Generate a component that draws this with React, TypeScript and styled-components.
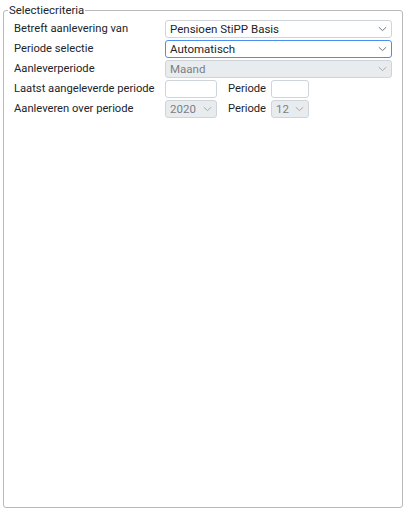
import React from "react";
import styled, { createGlobalStyle, css } from "styled-components";

const Global = createGlobalStyle`
  html, body {
    margin: 0;
    padding: 0;
    background: #ffffff;
  }
  body {
    font-family: Roboto, "Liberation Sans", Arial, sans-serif;
    font-size: 11.2px;
    color: #212529;
  }
`;

const Panel = styled.fieldset`
  box-sizing: border-box;
  margin: 3px 4px 4px 3px;
  height: 505px;
  border: 1px solid #b9b9b9;
  border-radius: 3px;
  padding: 3px 10px 0 10px;
  min-width: 0;
`;

const Legend = styled.legend`
  margin-left: -6px;
  padding: 0 1px;
  font-size: 11.4px;
  line-height: 14px;
  color: #212529;
`;

const Form = styled.div`
  display: grid;
  grid-template-columns: 151px 1fr;
  row-gap: 2px;
  align-items: center;
`;

const Label = styled.label`
  font-size: 11.2px;
  line-height: 18px;
  white-space: nowrap;
`;

const Inline = styled.div`
  display: flex;
  align-items: center;
`;

const InlineLabel = styled.span`
  width: 54px;
  padding-left: 11px;
  box-sizing: border-box;
  font-size: 11.2px;
  line-height: 18px;
`;

const fieldBase = css`
  box-sizing: border-box;
  height: 18px;
  border: 1px solid #ced4da;
  border-radius: 3px;
  background: #ffffff;
  font-family: Roboto, "Liberation Sans", Arial, sans-serif;
  font-size: 11.5px;
  line-height: 16px;
  color: #212529;
`;

const SelectBox = styled.div<{ $w?: number; $disabled?: boolean; $focus?: boolean }>`
  ${fieldBase};
  display: flex;
  align-items: center;
  justify-content: space-between;
  padding: 0 4px 0 4px;
  width: ${(p) => (p.$w ? `${p.$w}px` : "auto")};
  ${(p) =>
    p.$disabled &&
    css`
      background: #e9ecef;
      color: #7a7f85;
    `}
  ${(p) =>
    p.$focus &&
    css`
      border-color: #4a8ff0;
    `}
`;

const TextBox = styled.div<{ $w: number }>`
  ${fieldBase};
  width: ${(p) => p.$w}px;
`;

const Chevron = ({ muted }: { muted?: boolean }) => (
  <svg width="9" height="6" viewBox="0 0 9 6" fill="none">
    <path
      d="M0.8 1.2 L4.5 4.6 L8.2 1.2"
      stroke={muted ? "#a4a9ae" : "#6f757b"}
      strokeWidth="1"
    />
  </svg>
);

type SelectProps = { value: string; w?: number; disabled?: boolean; focus?: boolean };

const Select = ({ value, w, disabled, focus }: SelectProps) => (
  <SelectBox $w={w} $disabled={disabled} $focus={focus}>
    <span>{value}</span>
    <Chevron muted={disabled} />
  </SelectBox>
);

export default function App() {
  return (
    <>
      <Global />
      <Panel>
        <Legend>Selectiecriteria</Legend>
        <Form>
          <Label>Betreft aanlevering van</Label>
          <Select value="Pensioen StiPP Basis" />

          <Label>Periode selectie</Label>
          <Select value="Automatisch" focus />

          <Label>Aanleverperiode</Label>
          <Select value="Maand" disabled />

          <Label>Laatst aangeleverde periode</Label>
          <Inline>
            <TextBox $w={52} />
            <InlineLabel>Periode</InlineLabel>
            <TextBox $w={38} />
          </Inline>

          <Label>Aanleveren over periode</Label>
          <Inline>
            <Select value="2020" w={52} disabled />
            <InlineLabel>Periode</InlineLabel>
            <Select value="12" w={38} disabled />
          </Inline>
        </Form>
      </Panel>
    </>
  );
}
